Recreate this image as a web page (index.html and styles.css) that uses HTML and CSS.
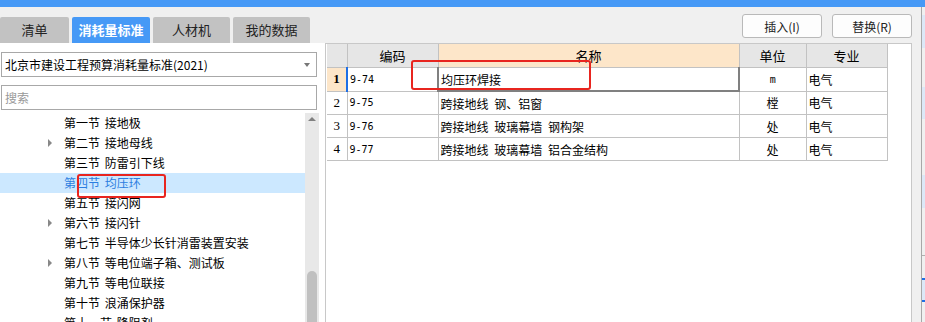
FILE: index.html
```html
<!DOCTYPE html>
<html lang="zh-CN">
<head>
<meta charset="UTF-8">
<meta name="viewport" content="width=device-width, initial-scale=1.0">
<title>消耗量标准</title>
<link rel="stylesheet" href="styles.css">
</head>
<body>

<div class="titlebar"></div>

<div class="window">
    <div class="left">
        <div class="tabs">
            <div class="tab tab-1">清单</div>
            <div class="tab tab-2 active">消耗量标准</div>
            <div class="tab tab-3">人材机</div>
            <div class="tab tab-4">我的数据</div>
        </div>

        <div class="left-body">
            <div class="combo">
                <span>北京市建设工程预算消耗量标准(2021)</span>
                <span class="combo-arrow"></span>
            </div>
            <div class="search">搜索</div>

            <div class="tree">
                <div class="tree-list">
                    <div class="tree-row"><span class="twist"></span>第一节 接地极</div>
                    <div class="tree-row"><span class="twist closed"></span>第二节 接地母线</div>
                    <div class="tree-row"><span class="twist"></span>第三节 防雷引下线</div>
                    <div class="tree-row selected"><span class="twist"></span>第四节 均压环</div>
                    <div class="tree-row"><span class="twist"></span>第五节 接闪网</div>
                    <div class="tree-row"><span class="twist closed"></span>第六节 接闪针</div>
                    <div class="tree-row"><span class="twist"></span>第七节 半导体少长针消雷装置安装</div>
                    <div class="tree-row"><span class="twist closed"></span>第八节 等电位端子箱、测试板</div>
                    <div class="tree-row"><span class="twist"></span>第九节 等电位联接</div>
                    <div class="tree-row"><span class="twist"></span>第十节 浪涌保护器</div>
                    <div class="tree-row"><span class="twist"></span>第十一节 降阻剂</div>
                </div>
                <div class="scrollbar">
                    <span class="scroll-up"></span>
                    <span class="scroll-thumb"></span>
                </div>
                <!-- annotation -->
                <div class="mark mark-tree"></div>
            </div>
        </div>
    </div>

    <div class="right">
        <div class="toolbar">
            <button type="button" class="btn">插入(I)</button>
            <button type="button" class="btn">替换(R)</button>
        </div>

        <div class="grid-panel">
            <table class="grid">
                <colgroup>
                    <col style="width:20px">
                    <col style="width:91px">
                    <col style="width:301px">
                    <col style="width:67px">
                    <col style="width:81px">
                </colgroup>
                <thead>
                    <tr>
                        <th></th>
                        <th>编码</th>
                        <th class="col-sel">名称</th>
                        <th>单位</th>
                        <th>专业</th>
                    </tr>
                </thead>
                <tbody>
                    <tr class="row-sel">
                        <td class="num">1</td>
                        <td class="code">9-74</td>
                        <td class="name cur">均压环焊接</td>
                        <td class="unit latin">m</td>
                        <td>电气</td>
                    </tr>
                    <tr>
                        <td class="num">2</td>
                        <td class="code">9-75</td>
                        <td class="name">跨接地线 钢、铝窗</td>
                        <td class="unit">樘</td>
                        <td>电气</td>
                    </tr>
                    <tr>
                        <td class="num">3</td>
                        <td class="code">9-76</td>
                        <td class="name">跨接地线 玻璃幕墙 钢构架</td>
                        <td class="unit">处</td>
                        <td>电气</td>
                    </tr>
                    <tr>
                        <td class="num">4</td>
                        <td class="code">9-77</td>
                        <td class="name">跨接地线 玻璃幕墙 铝合金结构</td>
                        <td class="unit">处</td>
                        <td>电气</td>
                    </tr>
                </tbody>
            </table>
            <!-- annotation -->
            <div class="mark mark-grid"></div>
        </div>
    </div>

    <div class="side">
        <div class="side-block b1"></div>
        <div class="side-block b2"></div>
        <div class="side-block b3"></div>
        <div class="side-line"></div>
        <div class="side-block b4"></div>
    </div>
</div>

</body>
</html>
```

FILE: styles.css
```css
body {
    margin: 0;
    width: 925px;
    height: 322px;
    overflow: hidden;
    background-color: #f0f0f0;
    font-family: "Noto Sans CJK SC", "Liberation Sans", sans-serif;
    font-size: 12px;
    color: #000;
}
.titlebar {
    height: 7px;
    background-color: #4699f6;
}
.window {
    display: flex;
    height: 315px;
}

/* left side */
.left {
    width: 325px;
    display: flex;
    flex-direction: column;
}
.tabs {
    display: flex;
    gap: 3px;
    padding-top: 10px;
    height: 26px;
}
.tab {
    height: 26px;
    line-height: 26px;
    text-align: center;
    background-color: #c2c2c2;
    border-radius: 2px 2px 0 0;
    font-size: 13px;
    color: #222;
}
.tab-1 { width: 69px; }
.tab-2 { width: 78px; }
.tab-3 { width: 77px; }
.tab-4 { width: 77px; }
.tab.active {
    background-color: #4699f6;
    color: #fff;
    font-weight: bold;
}
.left-body {
    flex: 1;
    background-color: #fff;
    display: flex;
    flex-direction: column;
    min-height: 0;
}
.combo,
.search {
    height: 25px;
    box-sizing: border-box;
    margin: 0 8px 0 1px;
    border: 1px solid #a8a8a8;
    padding-left: 3px;
    display: flex;
    align-items: center;
    font-size: 12px;
}
.combo {
    margin-top: 9px;
    justify-content: space-between;
}
.combo-arrow {
    width: 0;
    height: 0;
    margin-right: 6px;
    border-left: 3px solid transparent;
    border-right: 3px solid transparent;
    border-top: 4px solid #777;
}
.search {
    margin-top: 8px;
    color: #999;
}
.tree {
    position: relative;
    margin-top: 3px;
    width: 319px;
    flex: 1;
    display: flex;
    overflow: hidden;
}
.tree-list {
    flex: 1;
}
.tree-row {
    height: 20px;
    line-height: 20px;
    padding-left: 48px;
    display: flex;
    align-items: center;
    white-space: pre;
    word-spacing: 2px;
}
.tree-row.selected {
    background-color: #cce8ff;
    color: #2b7de0;
}
.twist {
    width: 16px;
    height: 8px;
}
.twist.closed {
    width: 0;
    height: 0;
    margin-right: 12px;
    border-top: 4px solid transparent;
    border-bottom: 4px solid transparent;
    border-left: 4px solid #888;
}
.scrollbar {
    position: relative;
    width: 14px;
    background-color: #e8e8e8;
}
.scroll-up {
    position: absolute;
    top: 4px;
    left: 3px;
    width: 0;
    height: 0;
    border-left: 4px solid transparent;
    border-right: 4px solid transparent;
    border-bottom: 4px solid #808080;
}
.scroll-thumb {
    position: absolute;
    top: 158px;
    bottom: 0;
    left: 2px;
    width: 10px;
    background-color: #c0c0c0;
    border-radius: 5px 5px 0 0;
}

/* red annotation boxes */
.mark {
    position: absolute;
    border: 2px solid #e8251f;
    border-radius: 3px;
}
.mark-tree {
    left: 77px;
    top: 61px;
    width: 85px;
    height: 20px;
}
.mark-grid {
    left: 85px;
    top: 16px;
    width: 176px;
    height: 26px;
}

/* right side */
.right {
    flex: 1;
    display: flex;
    flex-direction: column;
}
.toolbar {
    height: 36px;
    box-sizing: border-box;
    padding: 7px 9px 0 0;
    display: flex;
    justify-content: flex-end;
    align-items: flex-start;
    gap: 10px;
}
.btn {
    width: 80px;
    height: 24px;
    background-color: #fdfdfd;
    border: 1px solid #b9b9b9;
    border-radius: 3px;
    font-family: "Noto Sans CJK SC", "Liberation Sans", sans-serif;
    font-size: 12px;
    color: #222;
    padding: 0;
}
.grid-panel {
    position: relative;
    flex: 1;
    margin-right: 9px;
    background-color: #fff;
    border: 1px solid #c8c8c8;
    border-bottom: none;
    padding-left: 1px;
}
.grid {
    border-collapse: collapse;
    table-layout: fixed;
    width: 560px;
}
.grid th,
.grid td {
    border: 1px solid #c2c2c2;
    padding: 0 2px;
    height: 22px;
    white-space: nowrap;
    overflow: hidden;
    font-weight: normal;
    word-spacing: 3px;
}
.grid tr:first-child th {
    border-top: none;
}
.grid th:first-child,
.grid td:first-child {
    border-left: none;
}
.grid th {
    height: 23px;
    background-color: #e6e6e6;
    font-size: 13px;
}
.grid th.col-sel {
    background-color: #fde6c9;
}
.grid td.num {
    text-align: center;
    font-family: "Liberation Serif", serif;
    font-size: 13px;
}
.row-sel td.num {
    background-color: #fde6c9;
    font-weight: bold;
}
.grid td.code,
.grid td.latin {
    font-family: "DejaVu Sans Mono", monospace;
    font-size: 10px;
}
.row-sel td.code {
    border-left: 2px solid #1f6fe5;
}
.grid td.cur {
    border: 2px solid #808080;
    border-top: 1px solid #3f8ef0;
}
.grid td.unit {
    text-align: center;
}

/* strip of the next window */
.side {
    width: 3px;
    border-left: 1px solid #a8a8a8;
    display: flex;
    flex-direction: column;
}
.side-block {
    background-color: #dce8f7;
}
.b1 { margin-top: 8px; height: 33px; }
.b2 { margin-top: 39px; height: 32px; }
.b3 { margin-top: 56px; height: 33px; }
.side-line {
    margin-top: 47px;
    height: 1px;
    background-color: #b0b0b0;
}
.b4 {
    margin-top: 22px;
    height: 20px;
    border-top: 2px solid #1f6fe5;
    border-bottom: 2px solid #1f6fe5;
}
```
